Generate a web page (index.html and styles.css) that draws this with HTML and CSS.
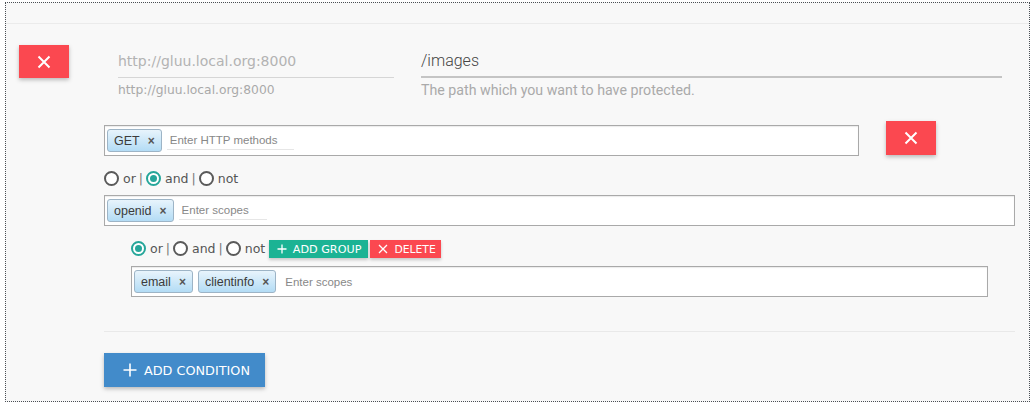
FILE: index.html
```html
<!DOCTYPE html>
<html>
<head>
<meta charset="utf-8">
<link rel="stylesheet" href="styles.css">
</head>
<body>
<div class="panel">
  <div class="topline"></div>
  <div class="row-main">
    <button class="btn-x btn-x-a" aria-label="remove">
      <svg width="14" height="14" viewBox="0 0 14 14"><path d="M1.5 1.5L12.5 12.5M12.5 1.5L1.5 12.5" stroke="#fff" stroke-width="2" fill="none"/></svg>
    </button>
    <div class="field field-url">
      <div class="line muted">http://gluu.local.org:8000</div>
      <div class="hint">http://gluu.local.org:8000</div>
    </div>
    <div class="field field-path">
      <div class="line path">/images</div>
      <div class="hint hint-r">The path which you want to have protected.</div>
    </div>
  </div>

  <div class="cond">
    <div class="row-methods">
      <div class="tags tags-methods">
        <span class="chip">GET<span class="cx">×</span></span>
        <span class="ph ph-methods">Enter HTTP methods</span>
      </div>
      <button class="btn-x btn-x-b" aria-label="remove">
        <svg width="14" height="14" viewBox="0 0 14 14"><path d="M1.5 1.5L12.5 12.5M12.5 1.5L1.5 12.5" stroke="#fff" stroke-width="2" fill="none"/></svg>
      </button>
    </div>

    <div class="radios r1">
      <span class="radio"></span><span class="rl">or</span><span class="sep">|</span>
      <span class="radio on"></span><span class="rl">and</span><span class="sep">|</span>
      <span class="radio"></span><span class="rl">not</span>
    </div>
    <div class="tags tags-scopes">
      <span class="chip">openid<span class="cx">×</span></span>
      <span class="ph ph-scopes">Enter scopes</span>
    </div>

    <div class="group">
      <div class="radios r2">
        <span class="radio on"></span><span class="rl">or</span><span class="sep">|</span>
        <span class="radio"></span><span class="rl">and</span><span class="sep">|</span>
        <span class="radio"></span><span class="rl rl-not">not</span>
        <button class="sbtn teal">
          <svg width="10" height="10" viewBox="0 0 10 10"><path d="M5 0.5V9.5M0.5 5H9.5" stroke="#fff" stroke-width="1.3" fill="none"/></svg>
          ADD GROUP
        </button>
        <button class="sbtn red">
          <svg width="10" height="10" viewBox="0 0 10 10"><path d="M1 1L9 9M9 1L1 9" stroke="#fff" stroke-width="1.3" fill="none"/></svg>
          DELETE
        </button>
      </div>
      <div class="tags tags-inner">
        <span class="chip">email<span class="cx">×</span></span>
        <span class="chip">clientinfo<span class="cx">×</span></span>
        <span class="ph ph-plain">Enter scopes</span>
      </div>
    </div>

    <div class="divider"></div>

    <button class="btn-add">
      <svg width="14" height="14" viewBox="0 0 14 14"><path d="M7 0.5V13.5M0.5 7H13.5" stroke="#fff" stroke-width="1.6" fill="none"/></svg>
      ADD CONDITION
    </button>
  </div>
</div>
</body>
</html>
```

FILE: styles.css
```css
* { box-sizing: border-box; }
html, body { margin: 0; padding: 0; background: #fff; }
body { padding: 2px 4px 2px 5px; font-family: "DejaVu Sans", sans-serif; }

.panel {
  height: 400px;
  border: 1px dotted #4a4f55;
  background: #f8f8f8;
  overflow: hidden;
}

.topline {
  height: 21px;
  border-bottom: 1px solid #ebebeb;
}

.row-main {
  display: flex;
  align-items: flex-start;
  margin-top: 21px;
  padding-left: 13px;
}

button { font-family: inherit; border: 0; padding: 0; cursor: pointer; }

.btn-x {
  width: 50px;
  background: #fb4850;
  box-shadow: 0 2px 4px rgba(0,0,0,.25);
  display: flex;
  align-items: center;
  justify-content: center;
}
.btn-x-a { height: 33px; }
.btn-x-b { height: 34px; margin-left: 27px; }

.field-url { margin-left: 49px; width: 276px; }
.field-path { margin-left: 27px; width: 581px; }

.line {
  height: 33px;
  line-height: 32px;
  border-bottom: 1px solid #d6d6d6;
}
.muted { font-size: 14px; color: #b3b3b3; }
.path {
  font-family: Roboto, sans-serif;
  font-weight: 300;
  font-size: 16px;
  color: #444;
  border-bottom: 2px solid #c4c4c4;
  line-height: 31px;
}
.hint {
  margin-top: 4px;
  font-size: 12.3px;
  line-height: 16px;
  color: #a9a9a9;
}
.hint-r {
  font-family: Roboto, sans-serif;
  font-size: 14.2px;
  color: #aaa;
}

.cond {
  margin-left: 98px;
  margin-top: 23px;
  width: 911px;
}

.row-methods {
  display: flex;
  align-items: flex-start;
}

.tags {
  display: flex;
  align-items: center;
  gap: 5px;
  background: #fff;
  border: 1px solid #a9a9a9;
  box-shadow: inset 0 1px 1px rgba(0,0,0,.08);
  padding: 0 2px;
  font-family: "Liberation Sans", Arial, sans-serif;
}
.tags-methods { width: 755px; height: 31px; margin-top: 4px; }
.tags-scopes { width: 911px; height: 31px; margin-top: 7px; }
.tags-inner { width: 857px; height: 31px; margin-top: 8px; }

.chip {
  display: inline-flex;
  align-items: center;
  height: 23px;
  padding: 0 6px 0 6px;
  border: 1px solid #9db4c6;
  border-radius: 3px;
  background: linear-gradient(#e8f4fc, #b3dcf5);
  color: #3b3b3b;
  font-size: 12.5px;
}
.cx {
  margin-left: 8px;
  font-weight: bold;
  font-size: 12px;
  color: #555;
  line-height: 1;
}

.ph {
  font-size: 11.5px;
  color: #888;
  padding: 0 0 3px 3px;
  margin-top: 3px;
}
.ph-methods { width: 127px; border-bottom: 1px solid #e6e6e6; }
.ph-scopes { width: 88px; border-bottom: 1px solid #e6e6e6; }
.ph-plain { margin-left: 1px; }

.radios {
  display: flex;
  align-items: center;
  height: 20px;
  font-size: 12.5px;
  color: #555;
}
.r1 { margin-top: 12px; }
.r2 { margin-top: 12px; }

.radio {
  width: 15px;
  height: 15px;
  border: 2px solid #5a5a5a;
  border-radius: 50%;
  background: #fff;
  position: relative;
}
.radio.on {
  border-color: #26a69a;
}
.radio.on::after {
  content: "";
  position: absolute;
  left: 2px;
  top: 2px;
  width: 7px;
  height: 7px;
  border-radius: 50%;
  background: #26a69a;
}
.rl { margin-left: 4px; }
.sep { margin: 0 3px 0 3px; color: #777; }
.rl-not { width: 24px; overflow: hidden; white-space: nowrap; }

.group { margin-left: 27px; }

.sbtn {
  display: inline-flex;
  align-items: center;
  gap: 6px;
  height: 18px;
  padding: 0 7px 0 8px;
  color: #fff;
  font-size: 11.2px;
  box-shadow: 0 2px 3px rgba(0,0,0,.2);
  margin-top: 2px;
}
.teal { background: #1bb394; }
.red { background: #fb4850; margin-left: 2px; font-size: 10.8px; padding-right: 5px; }

.divider {
  margin-top: 34px;
  height: 1px;
  background: #e9e9e9;
}

.btn-add {
  margin-top: 21px;
  width: 161px;
  height: 34px;
  background: #428bca;
  color: #fff;
  font-size: 12.8px;
  display: flex;
  align-items: center;
  gap: 7px;
  padding-left: 19px;
  box-shadow: 0 2px 4px rgba(0,0,0,.25);
}
```
